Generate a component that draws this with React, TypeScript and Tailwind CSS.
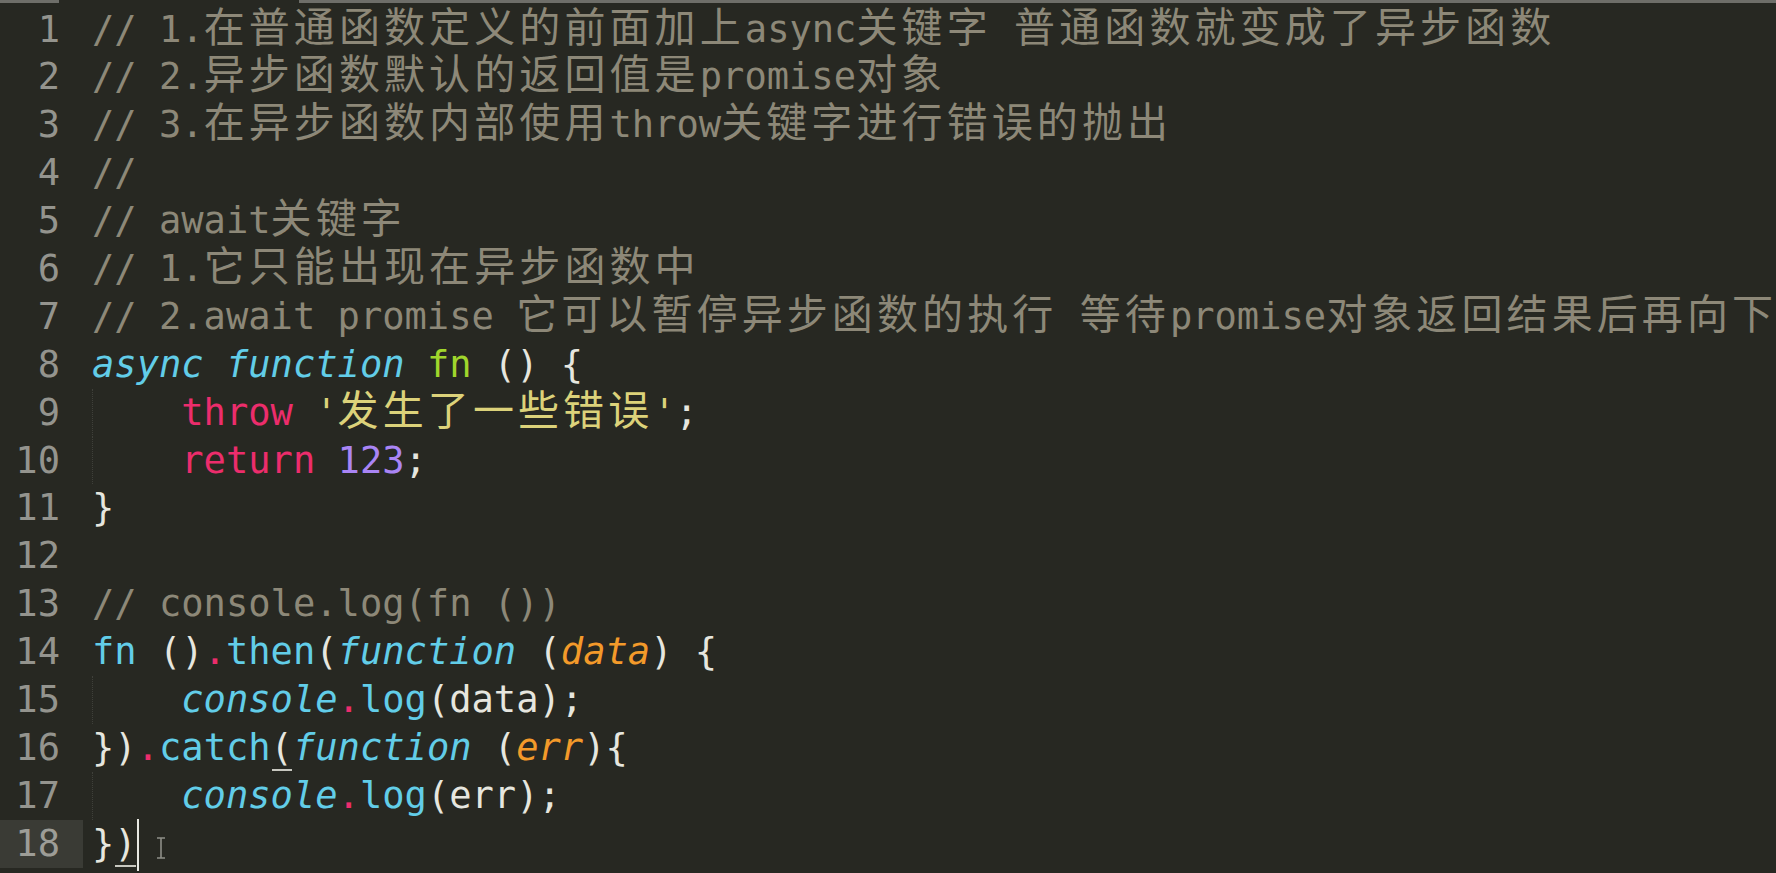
import React from "react";

type Seg = [string, string];

const C = "text-[#8d8878]"; // comment
const W = "text-[#e6e6df]"; // white
const CY = "text-[#62cde8]"; // cyan
const CYI = "text-[#62cde8] italic";
const G = "text-[#a0d62c]";
const P = "text-[#ec2d6c]";
const Y = "text-[#dcd27a]";
const PU = "text-[#a985f5]";
const O = "text-[#f39a2a] italic";

const lines: Seg[][] = [
  [["// 1.在普通函数定义的前面加上async关键字 普通函数就变成了异步函数", C]],
  [["// 2.异步函数默认的返回值是promise对象", C]],
  [["// 3.在异步函数内部使用throw关键字进行错误的抛出", C]],
  [["//", C]],
  [["// await关键字", C]],
  [["// 1.它只能出现在异步函数中", C]],
  [["// 2.await promise 它可以暂停异步函数的执行 等待promise对象返回结果后再向下", C]],
  [["async", CYI], [" ", W], ["function", CYI], [" ", W], ["fn", G], [" () {", W]],
  [["    ", W], ["throw", P], [" ", W], ["'发生了一些错误'", Y], [";", W]],
  [["    ", W], ["return", P], [" ", W], ["123", PU], [";", W]],
  [["}", W]],
  [],
  [["// console.log(fn ())", C]],
  [["fn", CY], [" ()", W], [".", P], ["then", CY], ["(", W], ["function", CYI], [" (", W], ["data", O], [") {", W]],
  [["    ", W], ["console", CYI], [".", P], ["log", CY], ["(data);", W]],
  [["})", W], [".", P], ["catch", CY], ["__PAREN__", W], ["function", CYI], [" (", W], ["err", O], ["){", W]],
  [["    ", W], ["console", CYI], [".", P], ["log", CY], ["(err);", W]],
  [["}", W], ["__CLOSE__", W]],
];

const CJK = /([\u3000-\u303f\u4e00-\u9fff\uff00-\uffef]+)/;

function renderText(text: string, cls: string, key: string) {
  const parts = text.split(CJK).filter((p) => p.length > 0);
  return parts.map((p, i) =>
    CJK.test(p) ? (
      <span
        key={key + "-" + i}
        className={cls + " text-[41px] leading-[37px] tracking-[4.1px] not-italic"}
      >
        {p}
      </span>
    ) : (
      <span key={key + "-" + i} className={cls}>
        {p}
      </span>
    )
  );
}

const guideRows = new Set([8, 9, 14, 16]);

export default function App() {
  return (
    <div
      className="w-[1776px] h-[873px] bg-[#272822] overflow-hidden relative"
      style={{ fontFamily: '"DejaVu Sans Mono", "Noto Sans CJK SC", monospace' }}
    >
      <div className="flex h-[3px]">
        <div className="w-[59px] bg-[#6e6e69]" />
        <div className="w-[240px]" />
        <div className="flex-1 bg-[#6e6e69]" />
      </div>
      <div className="flex flex-col pt-[2.5px] text-[37.1px] leading-[47.9px] whitespace-pre">
        {lines.map((segs, idx) => {
          const active = idx === 17;
          return (
            <div key={idx} className="flex h-[47.9px]">
              <div
                className={
                  "w-[83px] shrink-0 pr-[23px] text-right " +
                  (active ? "bg-[#3a3b35] text-[#9d9d97]" : "text-[#94948e]")
                }
              >
                {idx + 1}
              </div>
              <div className="relative pl-[9px] flex-1">
                {guideRows.has(idx) && (
                  <span className="absolute left-[9px] top-0 bottom-0 border-l border-dotted border-[#3f403a]" />
                )}
                {segs.map(([t, cls], si) => {
                  if (t === "__PAREN__") {
                    return (
                      <span key={si} className={"relative " + cls}>
                        (
                        <span className="absolute left-[1px] right-[1px] bottom-[-2px] h-[2px] bg-[#c8c8c0]" />
                      </span>
                    );
                  }
                  if (t === "__CLOSE__") {
                    return (
                      <span key={si} className={"relative " + cls}>
                        )
                        <span className="absolute left-[1px] right-[1px] bottom-[-2px] h-[2px] bg-[#c8c8c0]" />
                        <span className="absolute right-[-2px] top-[-3px] h-[52px] w-[2px] bg-[#e8e8e2]" />
                      </span>
                    );
                  }
                  return renderText(t, cls, idx + "-" + si);
                })}
                {active && (
                  <svg
                    className="absolute left-[72px] top-[17px]"
                    width="12"
                    height="22"
                    viewBox="0 0 12 22"
                  >
                    <path
                      d="M2 1 H10 M6 1 V21 M2 21 H10"
                      stroke="#8e8e88"
                      strokeWidth="1.6"
                      fill="none"
                    />
                  </svg>
                )}
              </div>
            </div>
          );
        })}
      </div>
    </div>
  );
}
